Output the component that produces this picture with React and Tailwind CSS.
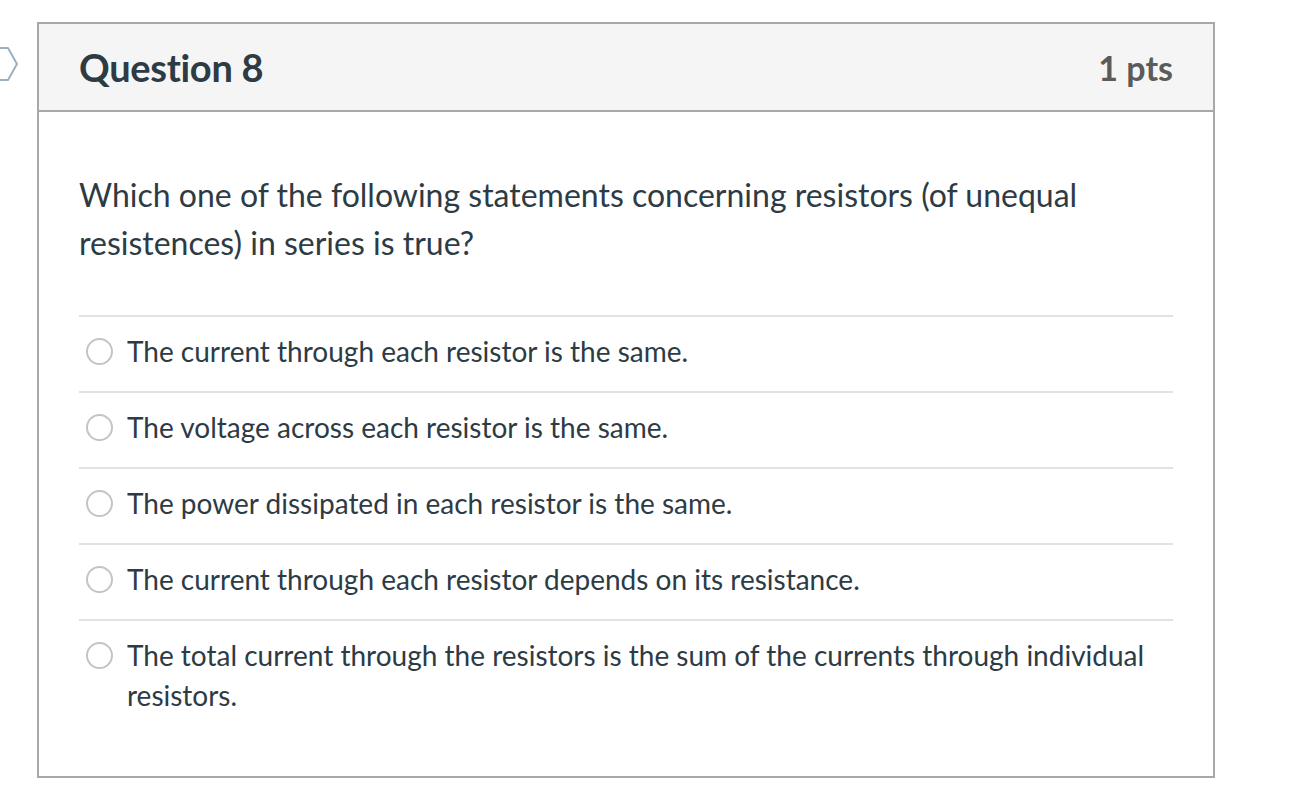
const options = [
  'The current through each resistor is the same.',
  'The voltage across each resistor is the same.',
  'The power dissipated in each resistor is the same.',
  'The current through each resistor depends on its resistance.',
  'The total current through the resistors is the sum of the currents through individual resistors.',
]

function FlagMarker() {
  return (
    <svg className="absolute left-0 top-[46px]" width="22" height="36" viewBox="0 0 22 36" fill="none">
      <path d="M-8 2 L8 2 L17 18 L8 34 L-8 34" stroke="#9db0c2" strokeWidth="2" strokeLinejoin="round" />
    </svg>
  )
}

export default function App() {
  return (
    <div className="relative min-h-[810px] bg-white pt-[22px] pl-[37px]" style={{ fontFamily: 'Lato, "Noto Sans", sans-serif' }}>
      <FlagMarker />
      <div className="w-[1178px] border-2 border-[#a8a8a8]">
        {/* Header */}
        <div className="flex items-center justify-between h-[88px] px-[40px] bg-[#f5f5f5] border-b-2 border-[#a8a8a8]">
          <span className="text-[38px] font-bold text-[#2d3b45] tracking-[-0.3px]">Question 8</span>
          <span className="text-[34px] font-bold text-[#5b5b5b]">1 pts</span>
        </div>

        {/* Body */}
        <div className="px-[40px] pt-[59px] pb-[41px]">
          <p className="text-[32px] leading-[48px] text-[#2d3b45] pr-[60px]">
            Which one of the following statements concerning resistors (of unequal resistences) in series is true?
          </p>

          <div className="mt-[48px]">
            {options.map((o) => (
              <label key={o} className="flex items-start gap-[14px] border-t-2 border-[#e2e2e2] pt-[14px] pb-[20px] pl-[7px]">
                <span className="mt-[7px] shrink-0 w-[27px] h-[27px] rounded-full border-2 border-[#c4c4c4] bg-white" />
                <span className="text-[28px] leading-[40px] text-[#2d3b45]">{o}</span>
              </label>
            ))}
          </div>
        </div>
      </div>
    </div>
  )
}
